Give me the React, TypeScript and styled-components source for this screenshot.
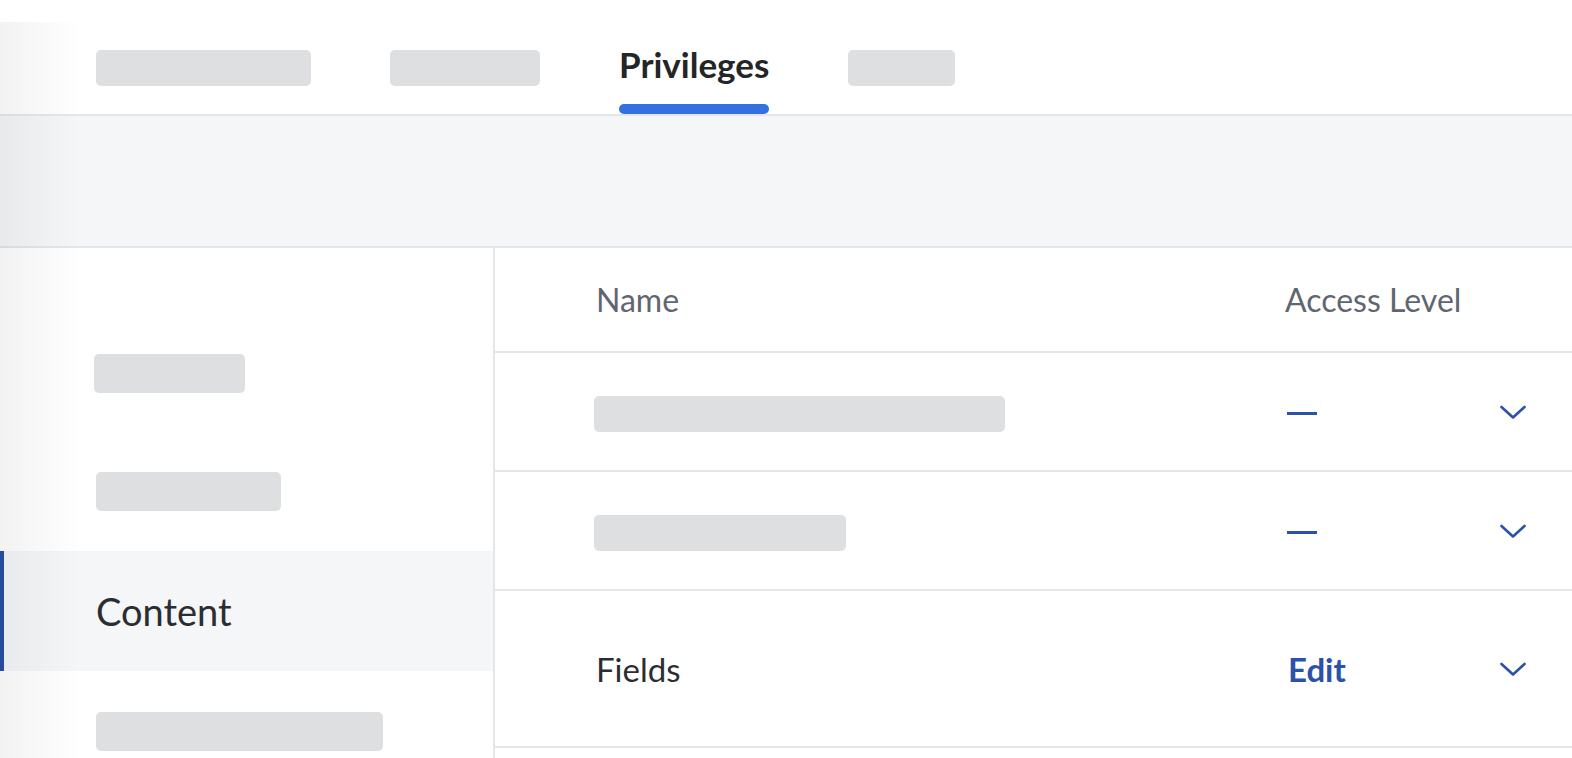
import styled, { createGlobalStyle } from 'styled-components';

const GlobalStyle = createGlobalStyle`
  html, body {
    margin: 0;
    padding: 0;
    background: #ffffff;
    font-family: Lato, "Liberation Sans", sans-serif;
    color: #2b2d30;
  }
`;

const Page = styled.div`
  position: relative;
  width: 100%;
  height: 758px;
  overflow: hidden;
  background: #ffffff;
`;

const EdgeShade = styled.div`
  position: absolute;
  left: 0;
  top: 22px;
  bottom: 0;
  width: 80px;
  background: linear-gradient(to right, rgba(0, 0, 0, 0.05), rgba(0, 0, 0, 0));
  pointer-events: none;
`;

const TabBar = styled.div`
  display: flex;
  align-items: flex-start;
  gap: 79px;
  height: 116px;
  padding-left: 96px;
  border-bottom: 2px solid #e4e6e8;
  box-sizing: border-box;
`;

const Skeleton = styled.div<{ $w: number; $h?: number }>`
  width: ${p => p.$w}px;
  height: ${p => p.$h ?? 36}px;
  border-radius: 5px;
  background: #dedfe1;
  flex-shrink: 0;
`;

const TabSkeleton = styled(Skeleton)`
  margin-top: 50px;
`;

const ActiveTab = styled.div`
  display: flex;
  flex-direction: column;
  align-items: stretch;
  padding-top: 43px;
  height: 114px;
  box-sizing: border-box;
`;

const TabLabel = styled.span`
  font-size: 35px;
  font-weight: 700;
  line-height: 42px;
  color: #232527;
`;

const TabUnderline = styled.div`
  margin-top: auto;
  height: 10px;
  border-radius: 5px;
  background: #3370e0;
`;

const Band = styled.div`
  height: 132px;
  background: #f5f6f8;
  border-bottom: 2px solid #e4e6e8;
  box-sizing: border-box;
`;

const Body = styled.div`
  display: flex;
  align-items: stretch;
  height: 510px;
`;

const Sidebar = styled.div`
  width: 493px;
  flex-shrink: 0;
  border-right: 2px solid #e4e6e8;
  padding-top: 63px;
`;

const SideItem = styled.div<{ $active?: boolean }>`
  display: flex;
  align-items: center;
  height: 120px;
  padding-left: ${p => (p.$active ? '92px' : '96px')};
  background: ${p => (p.$active ? '#f5f6f8' : 'transparent')};
  border-left: ${p => (p.$active ? '4px solid #2a4ea4' : 'none')};
  font-size: 38px;
  color: #2b2d30;
`;

const Table = styled.div`
  flex: 1;
  display: flex;
  flex-direction: column;
`;

const Row = styled.div<{ $h: number }>`
  display: grid;
  grid-template-columns: 1fr 215px 72px;
  align-items: center;
  height: ${p => p.$h}px;
  padding-left: 101px;
  border-bottom: 2px solid #e4e6e8;
  box-sizing: border-box;
`;

const HeadCell = styled.span`
  font-size: 32px;
  color: #5f6670;
`;

const NameCell = styled.span`
  font-size: 33px;
  color: #2b2d30;
`;

const RowSkeleton = styled(Skeleton)`
  margin: 4px 0 0 -2px;
`;

const Level = styled.span`
  font-size: 33px;
  font-weight: 700;
  color: #2b51a8;
  padding-left: 3px;
`;

const Dash = styled.span`
  display: block;
  width: 30px;
  height: 3px;
  margin: 4px 0 0 2px;
  background: #2b51a8;
`;

const ChevronBox = styled.span`
  display: flex;
  align-items: center;
  margin-top: 1px;
`;

const Chevron = () => (
  <ChevronBox>
    <svg width="26" height="16" viewBox="0 0 26 16" fill="none">
      <path d="M1.5 3 L13 13.5 L24.5 3" stroke="#2b51a8" strokeWidth="2.6" strokeLinecap="round" strokeLinejoin="round" />
    </svg>
  </ChevronBox>
);

export default function App() {
  return (
    <>
      <GlobalStyle />
      <Page>
        <TabBar>
          <TabSkeleton $w={215} />
          <TabSkeleton $w={150} />
          <ActiveTab>
            <TabLabel>Privileges</TabLabel>
            <TabUnderline />
          </ActiveTab>
          <TabSkeleton $w={107} />
        </TabBar>
        <Band />
        <Body>
          <Sidebar>
            <SideItem>
              <Skeleton $w={151} $h={39} style={{ marginLeft: -2, marginTop: 5 }} />
            </SideItem>
            <SideItem>
              <Skeleton $w={185} $h={39} />
            </SideItem>
            <SideItem $active>Content</SideItem>
            <SideItem>
              <Skeleton $w={287} $h={39} />
            </SideItem>
          </Sidebar>
          <Table>
            <Row $h={105}>
              <HeadCell>Name</HeadCell>
              <HeadCell>Access Level</HeadCell>
              <span />
            </Row>
            <Row $h={119}>
              <RowSkeleton $w={411} />
              <Dash />
              <Chevron />
            </Row>
            <Row $h={119}>
              <RowSkeleton $w={252} />
              <Dash />
              <Chevron />
            </Row>
            <Row $h={157}>
              <NameCell>Fields</NameCell>
              <Level>Edit</Level>
              <Chevron />
            </Row>
          </Table>
        </Body>
        <EdgeShade />
      </Page>
    </>
  );
}
